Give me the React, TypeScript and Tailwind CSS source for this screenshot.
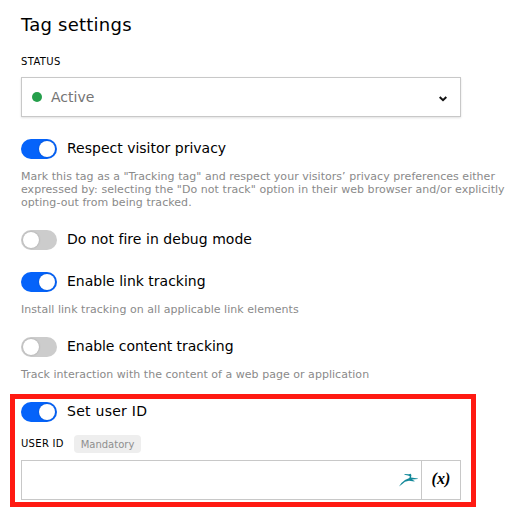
import { ReactNode } from "react";

const Toggle = ({ on }: { on: boolean }) => (
  <span className={`flex h-5 w-9 shrink-0 items-center rounded-full px-[2px] ${on ? "justify-end bg-[#0563fa]" : "justify-start bg-[#cccccc]"}`}>
    <span className="size-4 rounded-full bg-white shadow-[0_0_2px_rgba(0,0,0,0.25)]" />
  </span>
);

const ToggleRow = ({ on, spacing, children }: { on: boolean; spacing: string; children: ReactNode }) => (
  <div className="flex h-5 gap-[10px]">
    <Toggle on={on} />
    <span className={`-mt-px whitespace-nowrap text-[14px] leading-5 text-black ${spacing}`}>{children}</span>
  </div>
);

export default function App() {
  return (
    <div className="h-[508px] w-[523px] overflow-hidden bg-white font-['Verdana','DejaVu_Sans',sans-serif] text-black">
      <div className="px-[21px] pt-[13px]">
        <h1 className="h-6 whitespace-nowrap text-[18px] leading-6 tracking-[0.23px]">Tag settings</h1>
        <div className="mt-[18px] h-[13px] text-[10px] leading-[13px] tracking-[0.35px]">STATUS</div>
        <div className="mt-[9px] flex h-10 w-[440px] items-center border border-[#c8c8c8] pr-[13px] pl-[10px] shadow-[0_1px_2px_rgba(0,0,0,0.12)]">
          <span className="size-[10px] rounded-full bg-[#259f4b]" />
          <span className="ml-[9px] text-[14px] leading-5 text-[#757575]">Active</span>
          <svg className="mt-[3px] ml-auto" width="8" height="6" viewBox="0 0 8 6" fill="none" stroke="#111111" strokeWidth="2">
            <path d="M0.7 1 L4 4.2 L7.3 1" />
          </svg>
        </div>

        <div className="mt-[22px]">
          <ToggleRow on spacing="tracking-[0px]">Respect visitor privacy</ToggleRow>
        </div>
        <div className="mt-[11px] whitespace-nowrap text-[11px] leading-[13px] text-[#8a8a8a]">
          <p className="tracking-[0.03px]">Mark this tag as a "Tracking tag" and respect your visitors’ privacy preferences either</p>
          <p className="tracking-[0.05px]">expressed by: selecting the "Do not track" option in their web browser and/or explicitly</p>
          <p className="tracking-[0.06px]">opting-out from being tracked.</p>
        </div>

        <div className="mt-[21px]">
          <ToggleRow on={false} spacing="tracking-[0.04px]">Do not fire in debug mode</ToggleRow>
        </div>

        <div className="mt-[22px]">
          <ToggleRow on spacing="tracking-[0px]">Enable link tracking</ToggleRow>
        </div>
        <p className="mt-[11px] whitespace-nowrap text-[11px] leading-[13px] tracking-[0.04px] text-[#8a8a8a]">Install link tracking on all applicable link elements</p>

        <div className="mt-[21px]">
          <ToggleRow on={false} spacing="tracking-[-0.04px]">Enable content tracking</ToggleRow>
        </div>
        <p className="mt-[11px] whitespace-nowrap text-[11px] leading-[13px] tracking-[0.03px] text-[#8a8a8a]">Track interaction with the content of a web page or application</p>
      </div>

      <div className="mt-[13px] ml-[10px] h-[113px] w-[466px] border-5 border-[#ff1a12] pt-[3px] pl-[6px]">
        <ToggleRow on spacing="tracking-[0.27px]">Set user ID</ToggleRow>
        <div className="mt-[13px] flex h-[18px] items-center">
          <span className="w-[53px] whitespace-nowrap text-[10px] leading-[18px] tracking-[0.3px]">USER ID</span>
          <span className="flex h-[18px] w-[67px] items-center justify-center rounded-[4px] bg-[#eeeeee] text-[10px] text-[#8f8f8f]">Mandatory</span>
        </div>
        <div className="mt-[7px] flex h-10 w-[440px] border border-[#c8c8c8]">
          <div className="flex flex-1 items-center justify-end pr-[3px]">
            <svg width="19" height="14" viewBox="0 0 19 14" fill="#14899a">
              <path d="M0 13.4 L2.4 10 L6 7 L10.4 5 L10.8 3.2 L9 2.4 L5.5 1.8 L5.5 1.1 L10 1.3 L11.6 0.8 L12.4 2 L12 4.6 L18.8 5.4 L18.8 6.1 L13 6.6 L15.6 8 L15.4 8.5 L10 7.8 L6 8.8 L3 11.2 Z" />
            </svg>
          </div>
          <div className="flex w-[39px] items-center justify-center border-l border-[#c8c8c8] pb-[2px] font-['Liberation_Serif',serif] text-[16px] font-bold tracking-[0.1px] italic">(x)</div>
        </div>
      </div>
    </div>
  );
}
